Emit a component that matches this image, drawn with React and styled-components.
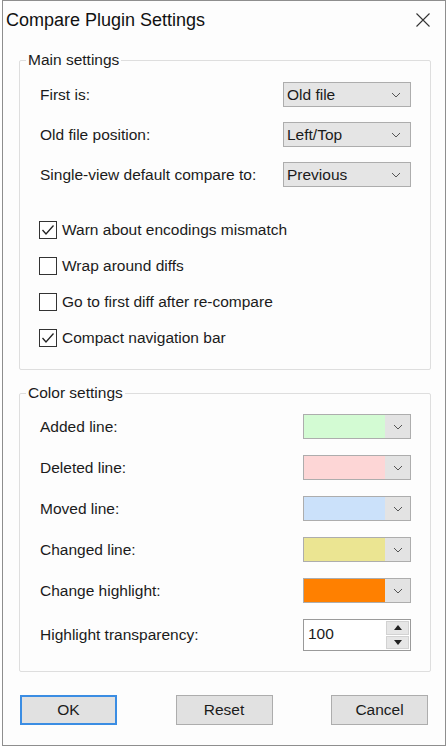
import { createGlobalStyle } from "styled-components";
import styled from "styled-components";

const GlobalStyle = createGlobalStyle`
  html, body {
    margin: 0;
    padding: 0;
    background: #ffffff;
  }
  body {
    font-family: "Liberation Sans", Arial, sans-serif;
    color: #1b1b1b;
  }
`;

const Window = styled.div`
  box-sizing: border-box;
  margin-left: 2px;
  width: 444px;
  height: 746px;
  border: 1px solid #8e8e8e;
  background: #fdfdfd;
  display: flex;
  flex-direction: column;
`;

const TitleBar = styled.div`
  height: 38px;
  display: flex;
  align-items: center;
  justify-content: space-between;
  padding: 0 14px 0 3px;
`;

const Title = styled.div`
  font-size: 18px;
  color: #111;
`;

const CloseBtn = styled.div`
  width: 16px;
  height: 16px;
  display: flex;
  svg {
    display: block;
  }
`;

const Body = styled.div`
  display: flex;
  flex-direction: column;
  padding: 12px 14px 0 16px;
`;

const Group = styled.fieldset`
  margin: 0 0 ${(p) => p.$after || 0}px 0;
  padding: 0;
  border: 1px solid #dedede;
  border-radius: 2px;
  min-width: 0;
  legend {
    font-size: 15.5px;
    line-height: 18px;
    padding: 0 2px;
    margin-left: 6px;
    color: #1b1b1b;
  }
`;

const GroupBody = styled.div`
  display: flex;
  flex-direction: column;
  padding: ${(p) => p.$top}px 19px ${(p) => p.$bottom}px 20px;
`;

const List = styled.div`
  display: flex;
  flex-direction: column;
  gap: ${(p) => p.$gap}px;
  margin-top: ${(p) => p.$mt || 0}px;
`;

const Row = styled.div`
  display: flex;
  align-items: center;
  justify-content: space-between;
  height: ${(p) => p.$h || 25}px;
`;

const Label = styled.span`
  font-size: 15.5px;
`;

const Select = styled.div`
  box-sizing: border-box;
  width: 128px;
  height: 25px;
  border: 1px solid #adadad;
  background: #e5e5e5;
  display: flex;
  align-items: center;
  justify-content: space-between;
  padding: 0 9px 0 3px;
  font-size: 15.5px;
`;

const Chevron = () => (
  <svg width="10" height="6" viewBox="0 0 10 6">
    <polyline points="1,1 5,5 9,1" fill="none" stroke="#555" strokeWidth="1" />
  </svg>
);

const ColorCombo = styled.div`
  box-sizing: border-box;
  width: 108px;
  height: 25px;
  border: 1px solid #adadad;
  background: #e3e3e3;
  display: flex;
  align-items: stretch;
`;

const Swatch = styled.div`
  flex: 0 0 81px;
  background: ${(p) => p.$color};
`;

const ComboArrow = styled.div`
  flex: 1;
  display: flex;
  align-items: center;
  justify-content: center;
`;

const Spin = styled.div`
  box-sizing: border-box;
  width: 108px;
  height: 32px;
  border: 1px solid #9a9a9a;
  background: #fff;
  display: flex;
`;

const SpinText = styled.div`
  flex: 1;
  font-size: 15.5px;
  padding: 5px 0 0 4px;
`;

const SpinButtons = styled.div`
  width: 23px;
  display: flex;
  flex-direction: column;
  gap: 1px;
  padding: 1px;
`;

const SpinBtn = styled.div`
  flex: 1;
  background: #e6e6e6;
  border: 1px solid #d2d2d2;
  display: flex;
  align-items: center;
  justify-content: center;
`;

const CheckRow = styled.div`
  display: flex;
  align-items: center;
  gap: 5px;
  height: 18px;
  font-size: 15.5px;
`;

const Box = styled.div`
  box-sizing: border-box;
  width: 18px;
  height: 18px;
  border: 1px solid #333;
  background: #fff;
  display: flex;
  align-items: center;
  justify-content: center;
  margin-left: -1px;
`;

const ButtonRow = styled.div`
  display: flex;
  justify-content: space-between;
  padding: 0 3px 0 1px;
`;

const Button = styled.div`
  box-sizing: border-box;
  width: 97px;
  height: 30px;
  display: flex;
  align-items: center;
  justify-content: center;
  font-size: 15.5px;
  background: #e1e1e1;
  border: ${(p) => (p.$default ? "2px solid #3b8de3" : "1px solid #adadad")};
`;

const Check = ({ checked, children }) => (
  <CheckRow>
    <Box>
      {checked && (
        <svg width="14" height="12" viewBox="0 0 14 12">
          <polyline points="1.5,6 5,10 12.5,1.5" fill="none" stroke="#222" strokeWidth="1.3" />
        </svg>
      )}
    </Box>
    <span>{children}</span>
  </CheckRow>
);

const colors = [
  ["Added line:", "#d3fbd3"],
  ["Deleted line:", "#fdd6d6"],
  ["Moved line:", "#cbe1fa"],
  ["Changed line:", "#ebe592"],
  ["Change highlight:", "#ff8000"],
];

export default function App() {
  return (
    <>
      <GlobalStyle />
      <Window>
        <TitleBar>
          <Title>Compare Plugin Settings</Title>
          <CloseBtn>
            <svg width="16" height="16" viewBox="0 0 16 16">
              <path d="M1.5 1.5 L14.5 14.5 M14.5 1.5 L1.5 14.5" stroke="#333" strokeWidth="1.1" />
            </svg>
          </CloseBtn>
        </TitleBar>
        <Body>
          <Group $after={14}>
            <legend>Main settings</legend>
            <GroupBody $top={13} $bottom={22}>
              <List $gap={15}>
                <Row>
                  <Label>First is:</Label>
                  <Select>
                    Old file <Chevron />
                  </Select>
                </Row>
                <Row>
                  <Label>Old file position:</Label>
                  <Select>
                    Left/Top <Chevron />
                  </Select>
                </Row>
                <Row>
                  <Label>Single-view default compare to:</Label>
                  <Select>
                    Previous <Chevron />
                  </Select>
                </Row>
              </List>
              <List $gap={18} $mt={34}>
                <Check checked>Warn about encodings mismatch</Check>
                <Check>Wrap around diffs</Check>
                <Check>Go to first diff after re-compare</Check>
                <Check checked>Compact navigation bar</Check>
              </List>
            </GroupBody>
          </Group>
          <Group $after={23}>
            <legend>Color settings</legend>
            <GroupBody $top={12} $bottom={20}>
              <List $gap={16}>
                {colors.map(([name, c]) => (
                  <Row key={name}>
                    <Label>{name}</Label>
                    <ColorCombo>
                      <Swatch $color={c} />
                      <ComboArrow>
                        <Chevron />
                      </ComboArrow>
                    </ColorCombo>
                  </Row>
                ))}
                <Row $h={32}>
                  <Label>Highlight transparency:</Label>
                  <Spin>
                    <SpinText>100</SpinText>
                    <SpinButtons>
                      <SpinBtn>
                        <svg width="8" height="5" viewBox="0 0 8 5">
                          <polygon points="0,5 4,0 8,5" fill="#222" />
                        </svg>
                      </SpinBtn>
                      <SpinBtn>
                        <svg width="8" height="5" viewBox="0 0 8 5">
                          <polygon points="0,0 8,0 4,5" fill="#222" />
                        </svg>
                      </SpinBtn>
                    </SpinButtons>
                  </Spin>
                </Row>
              </List>
            </GroupBody>
          </Group>
          <ButtonRow>
            <Button $default>OK</Button>
            <Button>Reset</Button>
            <Button>Cancel</Button>
          </ButtonRow>
        </Body>
      </Window>
    </>
  );
}
